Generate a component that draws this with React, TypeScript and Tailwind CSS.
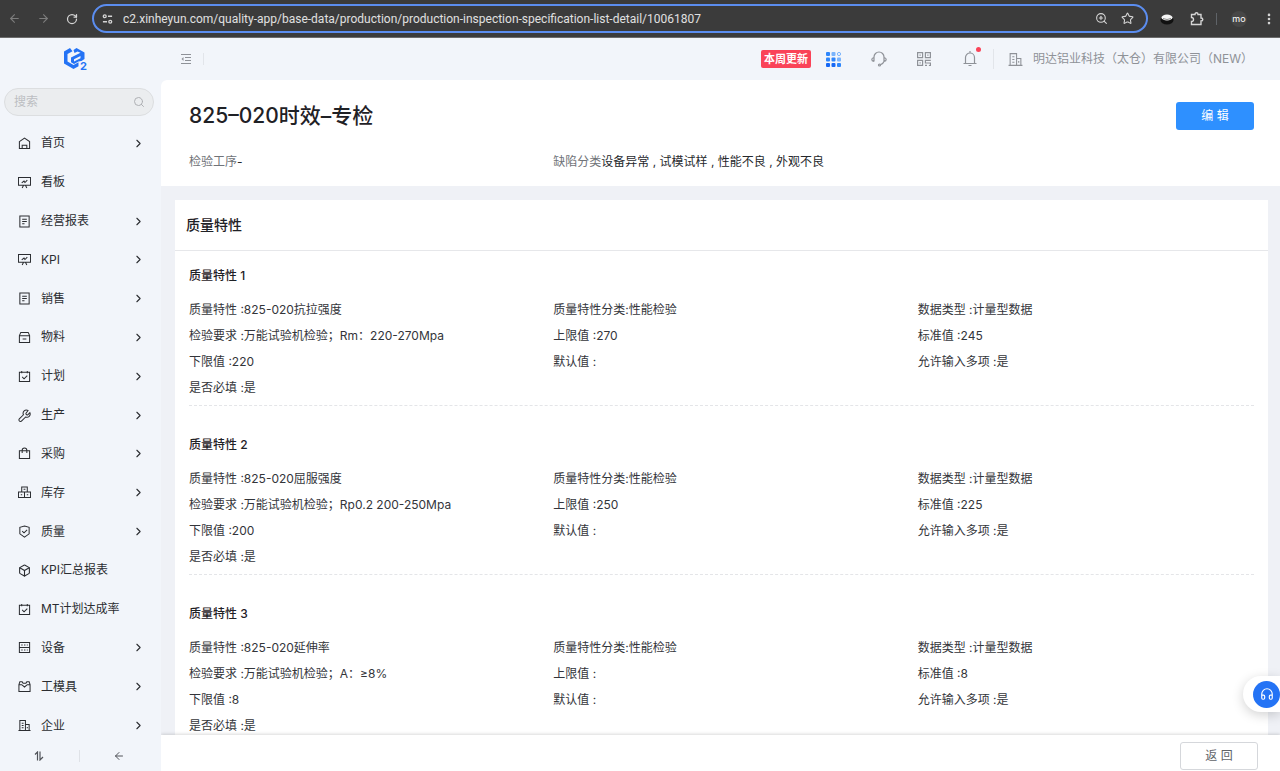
import React from "react";
import {
  ArrowLeft,
  ArrowRight,
  Box,
  ChevronRight,
  EllipsisVertical,
  Headphones,
  RotateCw,
  Search,
  Star,
  ZoomIn,
} from "lucide-react";

type IconName =
  | "home"
  | "board"
  | "report"
  | "material"
  | "plan"
  | "wrench"
  | "bag"
  | "stock"
  | "shield"
  | "cube"
  | "device"
  | "mould"
  | "company";

interface MenuItem {
  label: string;
  icon: IconName;
  expandable: boolean;
}

interface Characteristic {
  id: number;
  name: string;
  requirement: string;
  upper: string;
  lower: string;
  standard: string;
}

const menu: MenuItem[] = [
  { label: "首页", icon: "home", expandable: true },
  { label: "看板", icon: "board", expandable: false },
  { label: "经营报表", icon: "report", expandable: true },
  { label: "KPI", icon: "board", expandable: true },
  { label: "销售", icon: "report", expandable: true },
  { label: "物料", icon: "material", expandable: true },
  { label: "计划", icon: "plan", expandable: true },
  { label: "生产", icon: "wrench", expandable: true },
  { label: "采购", icon: "bag", expandable: true },
  { label: "库存", icon: "stock", expandable: true },
  { label: "质量", icon: "shield", expandable: true },
  { label: "KPI汇总报表", icon: "cube", expandable: false },
  { label: "MT计划达成率", icon: "plan", expandable: false },
  { label: "设备", icon: "device", expandable: true },
  { label: "工模具", icon: "mould", expandable: true },
  { label: "企业", icon: "company", expandable: true },
];

const characteristics: Characteristic[] = [
  {
    id: 1,
    name: "825-020抗拉强度",
    requirement: "万能试验机检验；Rm：220-270Mpa",
    upper: "270",
    lower: "220",
    standard: "245",
  },
  {
    id: 2,
    name: "825-020屈服强度",
    requirement: "万能试验机检验；Rp0.2 200-250Mpa",
    upper: "250",
    lower: "200",
    standard: "225",
  },
  {
    id: 3,
    name: "825-020延伸率",
    requirement: "万能试验机检验；A：≥8%",
    upper: "",
    lower: "8",
    standard: "8",
  },
];

const iconShapes: Record<IconName, React.ReactNode> = {
  home: <path d="M1.500 5 7 1.200 12.500 5v7.500h-11zM4.500 12.500V9h5v3.500" />,
  board: <path d="M.5 1.500h13v8.500H.5zM4.500 13 6 10M9.500 13 8 10M4 7.500l2.500-2 1 1.500L10 4.500" />,
  report: <path d="M2 1h10v12H2zM4.500 4.500h5M4.500 7h5M4.500 9.500h2.500" />,
  material: <path d="M1.500 5 3 1.500h8L12.500 5v7.500h-11zM1.500 5h11M5 8.500h4" />,
  plan: <path d="M1.500 2.500h11v10h-11zM4 1v2.500M10 1v2.500M4.500 7.500l2 2 3.500-3.500" />,
  wrench: (
    <path d="M8.700 4.500a.8.800 0 0 0 0 1l.8.800a.8.800 0 0 0 1 0l2.300-2.300a3.500 3.500 0 0 1-4.600 4.600L4 12.800a1.400 1.400 0 0 1-2.600-2.200l4.500-4.400A3.500 3.500 0 0 1 10.800 1.600z" />
  ),
  bag: <path d="M1.500 4h11v8.500h-11zM4.500 6.500V3.500a2.500 2.500 0 0 1 5 0v3" />,
  stock: (
    <path d="M4 1h6v5.500H4zM.5 6.500H7v6H.5zM7 6.500h6.500v6H7zM6 3.500h2M3 9.500h1.500M9.500 9.500H11" />
  ),
  shield: <path d="M7 1l5 1.500v7L7 13 2 9.500V2.500zM4.500 6.500l2 2 3.300-3.200" />,
  cube: null,
  device: (
    <path d="M1.500 1.500h11v11h-11zM1.500 7h11M3.500 4.300H5M6.500 4.300H8M9.500 4.300h1M3.500 9.800H5M6.500 9.800H8M9.500 9.800h1" />
  ),
  mould: <path d="M1 5 2 2h2.500l1 1.500h3l1-1.500H12l1 3v7.500H1zM1 5h3l3 2.500L10 5h3" />,
  company: (
    <path d="M2 12.500v-11h6v11M8 6h4v6.500M.5 12.500h13M4 4.500h2M4 7h2M4 9.500h2M10 8.500v1.500" />
  ),
};

function MenuIcon({ name }: { name: IconName }) {
  if (name === "cube") {
    return <Box size={13} strokeWidth={2} aria-hidden="true" />;
  }
  return (
    <svg
      width="13"
      height="13"
      viewBox="0 0 14 14"
      fill="none"
      stroke="currentColor"
      strokeWidth="1.100"
      aria-hidden="true"
    >
      {iconShapes[name]}
    </svg>
  );
}

function BrowserBar() {
  return (
    <div className="flex h-[38px] shrink-0 items-center border-b border-[#6b6b6b] bg-[#3b3b3b] pr-1 text-[#d5d5d5]">
      <div className="flex w-[92px] items-center gap-4 pl-2">
        <button type="button" aria-label="Back" className="text-[#7c7c7c]">
          <ArrowLeft size={13} />
        </button>
        <button type="button" aria-label="Forward" className="text-[#7c7c7c]">
          <ArrowRight size={13} />
        </button>
        <button type="button" aria-label="Reload">
          <RotateCw size={12} strokeWidth={2.500} />
        </button>
      </div>
      <div className="flex h-[29px] flex-1 items-center rounded-full border-2 border-[#5b8def] pr-3 pl-2">
        <svg width="11" height="12" viewBox="0 0 12 12" fill="none" stroke="currentColor" strokeWidth="1.400" aria-hidden="true">
          <circle cx="3" cy="3" r="1.600" />
          <path d="M6.500 3H11M1 9h4.500" />
          <circle cx="9" cy="9" r="1.600" />
        </svg>
        <input
          aria-label="Address"
          className="ml-[10px] min-w-0 flex-1 bg-transparent font-[Roboto,sans-serif] text-[12px] text-[#e0e0e0] outline-none"
          defaultValue="c2.xinheyun.com/quality-app/base-data/production/production-inspection-specification-list-detail/10061807"
        />
        <button type="button" aria-label="Zoom" className="mr-[13px]">
          <ZoomIn size={13} />
        </button>
        <button type="button" aria-label="Bookmark">
          <Star size={13} />
        </button>
      </div>
      <button type="button" aria-label="Extension" className="ml-3">
        <svg width="14" height="12" viewBox="0 0 14 12" aria-hidden="true">
          <ellipse cx="7" cy="7" rx="6.500" ry="4.500" fill="#111" />
          <ellipse cx="7" cy="4.500" rx="5.500" ry="3" fill="#f5f5f5" />
          <path d="M3 5.500q4 2 8 0" stroke="#888" fill="none" />
        </svg>
      </button>
      <button type="button" aria-label="Extensions" className="ml-4">
        <svg width="14" height="14" viewBox="0 0 14 14" fill="none" stroke="currentColor" strokeWidth="1.400" aria-hidden="true">
          <path d="M1.500 2.500H5q0-1.700 1.500-1.700T8 2.500h3v3.500q1.800 0 1.800 1.500T11 9v3.500H1.500V9.500q2 0 2-2t-2-2z" />
        </svg>
      </button>
      <span className="ml-3 h-3 w-px bg-[#5f6368]" />
      <button type="button" className="ml-[14px] h-4 w-4 rounded-full bg-[#474747] text-[9px] leading-4 text-white">
        mo
      </button>
      <button type="button" aria-label="Menu" className="ml-[15px]">
        <EllipsisVertical size={14} strokeWidth={2.500} />
      </button>
    </div>
  );
}

function Logo() {
  return (
    <svg width="26" height="24" viewBox="0 0 26 24" aria-label="C2" role="img">
      <path
        d="M8 1 2 4.500V16.500L11.500 22l5-2.800v-4L11.500 18 5.500 14.500V7L10.500 4.200z"
        fill="#2473f5"
      />
      <path
        d="M11.500 3 14.500 1 22.500 5.500V12L19.500 14l-3 .5L12 17 9 15.200V10.500L18.500 5.800 15.500 4.500 12.500 6z"
        fill="#2473f5"
      />
      <path d="M12 12.300 18.500 9v2.200L12 14.500z" fill="#f2f5fa" />
      <text x="18" y="22.500" fontSize="11" fontWeight="700" fill="#2473f5" stroke="#f2f5fa" strokeWidth="2" paintOrder="stroke">
        2
      </text>
    </svg>
  );
}

function Sidebar() {
  return (
    <aside className="flex w-[161px] shrink-0 flex-col">
      <div className="flex h-[42px] items-center pl-[62px]">
        <Logo />
      </div>
      <div className="mt-2 mr-[7px] ml-1 flex h-7 shrink-0 items-center rounded-full border border-[#dcdee0] bg-[#ebedef] pr-2 pl-[9px]">
        <input
          type="search"
          aria-label="搜索"
          placeholder="搜索"
          className="min-w-0 flex-1 bg-transparent text-[12px] outline-none placeholder:text-[#bcbec2]"
        />
        <Search size={12} className="text-[#aeb0b4]" aria-hidden="true" />
      </div>
      <nav className="mt-2 flex min-h-0 flex-1 flex-col">
        {menu.map((item) => (
          <a
            key={item.label}
            href="#"
            className="flex flex-1 items-center pr-4 pl-[18px] text-[12px] leading-5 text-[#2b2d31]"
          >
            <MenuIcon name={item.icon} />
            <span className="ml-[10px] flex-1">{item.label}</span>
            {item.expandable && <ChevronRight size={13} strokeWidth={2} />}
          </a>
        ))}
      </nav>
      <div className="flex h-[26px] shrink-0 items-center pr-[3px] pb-1 text-[#505359]">
        <button type="button" aria-label="排序" className="flex flex-1 justify-center">
          <svg width="10" height="10" viewBox="0 0 10 10" fill="none" stroke="currentColor" strokeWidth="1.200" aria-hidden="true">
            <path d="M1 3.500 3.500 1v8.500M6 .5V9l3-3" />
          </svg>
        </button>
        <span className="h-3 w-px bg-[#dfe2e7]" />
        <button type="button" aria-label="收起" className="flex flex-1 justify-center">
          <ArrowLeft size={12} />
        </button>
      </div>
    </aside>
  );
}

function TopBar() {
  return (
    <header className="flex h-[42px] shrink-0 items-center text-[#8f9298]">
      <button type="button" aria-label="收起菜单" className="ml-5">
        <svg width="10" height="10" viewBox="0 0 10 10" fill="none" stroke="currentColor" aria-hidden="true">
          <path d="M0 .5h10M4 3.500h6M4 6.500h6M0 9.500h10" />
          <path d="M2.500 3v4L.5 5z" fill="currentColor" stroke="none" />
        </svg>
      </button>
      <span className="ml-3 h-3 w-px bg-[#e2e5ea]" />
      <div className="ml-auto flex items-center">
        <span className="rounded-[2px] bg-[#fa4358] px-[3px] text-[11px] leading-[18px] font-bold text-white">
          本周更新
        </span>
        <button type="button" aria-label="应用" className="ml-[15px]">
          <svg width="15" height="15" viewBox="0 0 15 15" fill="#2e86fb" aria-hidden="true">
            <rect y="5.500" width="4" height="4" rx="1" />
            <rect x="5.500" y="5.500" width="4" height="4" rx="1" />
            <rect x="11" y="5.500" width="4" height="4" rx="1" fill="#79b3fb" />
            <rect width="4" height="4" rx="1" />
            <rect x="5.500" width="4" height="4" rx="1" fill="#79b3fb" />
            <rect y="11" width="4" height="4" rx="1" fill="#1668f5" />
            <rect x="5.500" y="11" width="4" height="4" rx="1" fill="#1668f5" />
            <rect x="11" y="11" width="4" height="4" rx="1" />
            <circle cx="13" cy="2" r="1.600" fill="none" stroke="#79b3fb" />
          </svg>
        </button>
        <button type="button" aria-label="客服" className="ml-[30px]">
          <svg width="16" height="16" viewBox="0 0 16 16" fill="none" stroke="currentColor" strokeWidth="1.200" aria-hidden="true">
            <path d="M3 10.500V6a5 5 0 0 1 10 0v4.500q-1 2.500-3.500 3.200M3 6.500q-2.200.5-2.200 2T3 10.500M13 6.500q2.200.5 2.200 2t-2.200 2" />
            <circle cx="8.500" cy="14" r="1" />
          </svg>
        </button>
        <button type="button" aria-label="二维码" className="ml-[30px]">
          <svg width="14" height="14" viewBox="0 0 14 14" fill="none" stroke="currentColor" strokeWidth="1.200" aria-hidden="true">
            <path d="M.6.6h5v5h-5zM8.400.6h5v5h-5zM.6 8.400h5v5h-5zM2.500 3.100h1.200M10.300 3.100h1.200M2.500 10.900h1.200M13.800 8.400H8.400v2.600h5v2.600h-1.500M8 13.400h2" />
          </svg>
        </button>
        <button type="button" aria-label="通知" className="relative ml-8">
          <svg width="14" height="16" viewBox="0 0 14 16" fill="none" stroke="currentColor" strokeWidth="1.200" aria-hidden="true">
            <path d="M7 0v2M2.500 12.500V6.500a4.500 4.500 0 0 1 9 0v6M.5 12.500h13M5.500 14.500h3" />
          </svg>
          <span className="absolute -top-1 -right-1 h-[5px] w-[5px] rounded-full bg-[#fa4358]" />
        </button>
        <span className="ml-4 h-5 w-px bg-[#e2e5ea]" />
        <a href="#" className="ml-[14px] flex items-center pr-[27px] text-[12px]">
          <svg width="15" height="15" viewBox="0 0 14 14" fill="none" stroke="currentColor" aria-hidden="true">
            {iconShapes.company}
          </svg>
          <span className="ml-[10px]">明达铝业科技（太仓）有限公司（NEW）</span>
        </a>
      </div>
    </header>
  );
}

function CharacteristicBlock({ item }: { item: Characteristic }) {
  return (
    <section className="mb-[27px] border-b border-dashed border-[#e4e5e8] pb-1">
      <h3 className="mb-[9px] text-[12px] leading-6 font-medium text-[#1f2126]">质量特性 {item.id}</h3>
      <div className="grid grid-cols-3 gap-x-7 text-[12px] leading-[26px] text-[#33353a]">
        <p>质量特性 :{item.name}</p>
        <p>质量特性分类:性能检验</p>
        <p>数据类型 :计量型数据</p>
        <p>检验要求 :{item.requirement}</p>
        <p>上限值 :{item.upper}</p>
        <p>标准值 :{item.standard}</p>
        <p>下限值 :{item.lower}</p>
        <p>默认值 :</p>
        <p>允许输入多项 :是</p>
        <p>是否必填 :是</p>
      </div>
    </section>
  );
}

export default function App() {
  return (
    <div className="flex h-screen flex-col overflow-hidden bg-[#f2f5fa] font-[Inter,'Noto_Sans_CJK_SC',sans-serif]">
      <BrowserBar />
      <div className="flex min-h-0 flex-1">
        <Sidebar />
        <div className="flex min-w-0 flex-1 flex-col">
          <TopBar />
          <main className="flex min-h-0 flex-1 flex-col overflow-hidden rounded-tl-md bg-[#eff1f6]">
            {/* Title */}
            <div className="shrink-0 bg-white pt-5 pr-[26px] pb-[11px] pl-7">
              <div className="flex items-center justify-between">
                <h1 className="text-[21px] leading-[31px] font-medium text-[#1f2126]">825–020时效–专检</h1>
                <button type="button" className="h-7 w-[78px] rounded-[3px] bg-[#2e90ff] text-[12px] text-white">
                  编 辑
                </button>
              </div>
              <div className="mt-[18px] grid grid-cols-3 gap-x-7 text-[12px] leading-[26px] text-[#26282c]">
                <p>
                  <span className="text-[#707378]">检验工序</span>-
                </p>
                <p>
                  <span className="text-[#707378]">缺陷分类</span>设备异常 , 试模试样 , 性能不良 , 外观不良
                </p>
              </div>
            </div>

            {/* Characteristics */}
            <div className="mt-[14px] mr-3 ml-[14px] min-h-0 flex-1 overflow-hidden bg-white">
              <h2 className="border-b border-[#e6e7ea] px-[11px] text-[14px] leading-[50px] font-medium text-[#1f2126]">
                质量特性
              </h2>
              <div className="px-[14px] pt-[13px]">
                {characteristics.map((item) => (
                  <CharacteristicBlock key={item.id} item={item} />
                ))}
              </div>
            </div>

            <footer className="z-10 flex h-9 shrink-0 items-center justify-end bg-white pt-1.5 pr-[22px] shadow-[0_-1px_3px_rgba(0,0,0,0.15)]">
              <button type="button" className="h-7 w-[78px] rounded-[3px] border border-[#d5d7db] text-[12px] text-[#606368]">
                返 回
              </button>
            </footer>
          </main>
        </div>
      </div>

      {/* Support button pinned to the window edge */}
      <div className="fixed right-0 bottom-[59px] z-20 flex h-9 w-[37px] items-center rounded-l-full bg-white pl-[10px] shadow-[0_3px_12px_rgba(0,0,0,0.18)]">
        <button type="button" aria-label="在线客服" className="flex h-[27px] w-[27px] shrink-0 items-center justify-center rounded-full bg-[#2473f5] text-white">
          <Headphones size={14} />
        </button>
      </div>
    </div>
  );
}
